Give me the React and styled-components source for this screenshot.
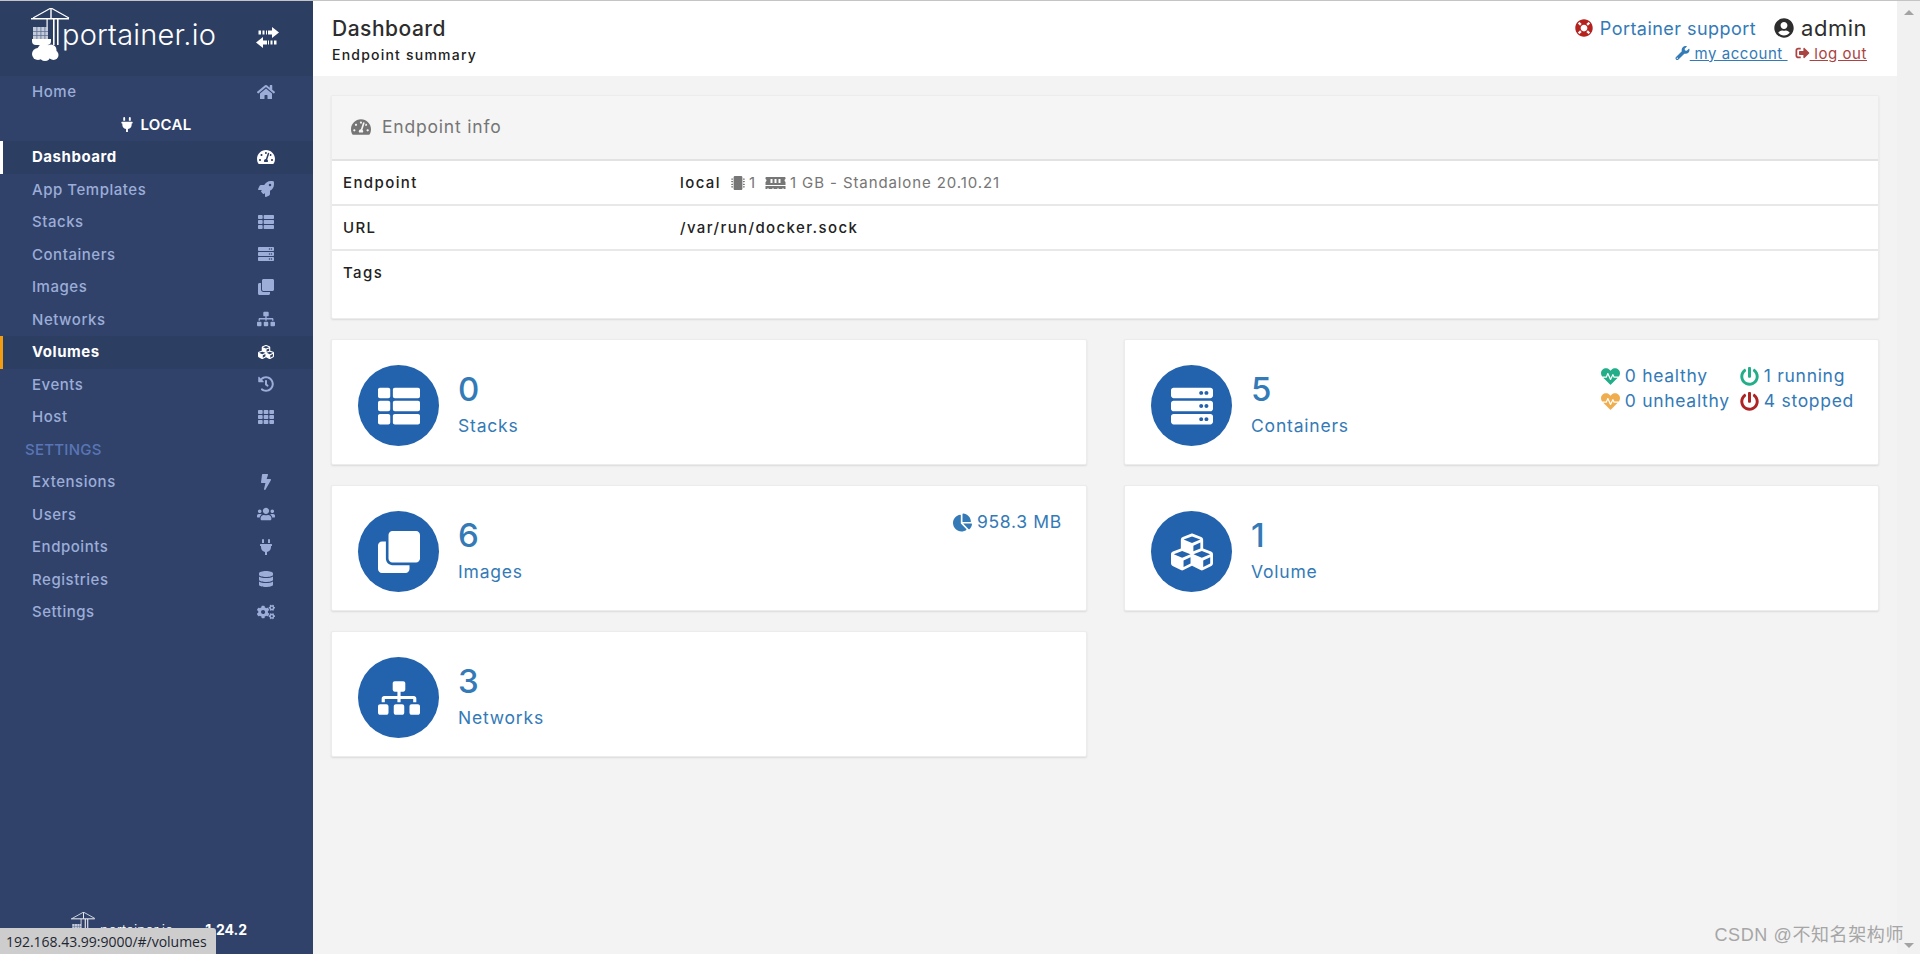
import React from "react";
import styled, { createGlobalStyle } from "styled-components";
import {
  FaHome,
  FaTachometerAlt,
  FaRocket,
  FaThList,
  FaServer,
  FaClone,
  FaSitemap,
  FaCubes,
  FaHistory,
  FaTh,
  FaBolt,
  FaUsers,
  FaPlug,
  FaDatabase,
  FaCogs,
  FaHeartbeat,
  FaPowerOff,
  FaChartPie,
  FaMemory,
  FaMicrochip,
  FaLifeRing,
  FaUserCircle,
  FaWrench,
  FaSignOutAlt,
} from "react-icons/fa";

const GlobalStyle = createGlobalStyle`
  html, body {
    margin: 0;
    height: 100%;
    overflow: hidden;
    background: #f3f3f3;
    font-family: Inter, "Liberation Sans", "Noto Sans CJK SC", sans-serif;
  }
  * { box-sizing: border-box; }
`;

const Page = styled.div`
  position: relative;
  display: flex;
  height: 954px;
  border-top: 1px solid #c4c4c4;
`;

const Sidebar = styled.aside`
  display: flex;
  flex-direction: column;
  width: 313px;
  flex: none;
  background: #30426a;
`;

const Brand = styled.div`
  display: flex;
  align-items: center;
  height: 75px;
  padding-left: 31px;
  background: #2d3e63;
  color: #fff;
`;

const BrandName = styled.span`
  margin-left: -9px;
  margin-top: -9px;
  font-size: 29px;
  font-weight: 300;
  letter-spacing: 0.2px;
`;

const Toggle = styled.svg`
  width: 23px;
  height: 21px;
  margin-left: auto;
  margin-right: 34px;
  margin-top: -2px;
`;

const NavRow = styled.div`
  display: flex;
  align-items: center;
  justify-content: space-between;
  height: 32.5px;
  padding: 0 38px 1px ${(p) => (p.$active ? 29 : 32)}px;
  font-size: 15px;
  font-weight: 500;
  letter-spacing: 0.53px;
  color: ${(p) => (p.$active ? "#fff" : "#9cadd8")};
  background: ${(p) => (p.$active ? "#2d3e63" : "transparent")};
  border-left: ${(p) => (p.$active ? `3px solid ${p.$active}` : "none")};
  font-weight: ${(p) => (p.$active ? 700 : 500)};

  svg {
    width: 18px;
    height: 16px;
    color: ${(p) => (p.$active ? "#fff" : "#9cadd8")};
  }
`;

const EndpointName = styled.div`
  display: flex;
  align-items: center;
  justify-content: center;
  gap: 6px;
  height: 32.5px;
  padding-right: 1px;
  color: #fff;
  font-size: 15px;
  font-weight: 600;
  letter-spacing: 0.3px;

  svg {
    width: 14px;
    height: 15px;
  }
`;

const SectionTitle = styled.div`
  display: flex;
  align-items: center;
  height: 32.5px;
  padding-left: 25px;
  font-size: 15px;
  font-weight: 500;
  letter-spacing: 0.25px;
  color: #5a75b5;
`;

const Footer = styled.div`
  display: flex;
  align-items: center;
  margin-top: auto;
  height: 50px;
  padding: 0 0 0 71px;
  color: #fff;
  font-size: 14px;
`;

const FooterName = styled.span`
  margin-left: 4px;
  font-size: 14px;
  font-weight: 300;
`;

const Version = styled.span`
  margin-left: 32px;
  font-weight: 700;
`;

const StatusBubble = styled.div`
  position: absolute;
  left: 0;
  bottom: 0;
  display: flex;
  align-items: center;
  width: 216px;
  height: 26px;
  padding-left: 6px;
  background: #cdcdcd;
  border-top-right-radius: 3px;
  color: #1d2733;
  font-family: "Open Sans", sans-serif;
  font-size: 14px;
  letter-spacing: -0.02px;
  white-space: nowrap;
`;

const Main = styled.main`
  display: flex;
  flex-direction: column;
  flex: 1;
  min-width: 0;
`;

const TopBar = styled.header`
  display: flex;
  justify-content: space-between;
  height: 75px;
  padding: 0 30px 0 19px;
  background: #fff;
`;

const TitleBlock = styled.div`
  padding-top: 16px;
`;

const Title = styled.div`
  font-size: 21px;
  line-height: 24px;
  font-weight: 500;
  letter-spacing: 0.5px;
  color: #2d2d2d;
`;

const Subtitle = styled.div`
  margin-top: 6px;
  font-size: 14px;
  line-height: 16px;
  font-weight: 500;
  letter-spacing: 1.22px;
  color: #222;
`;

const UserBlock = styled.div`
  display: flex;
  flex-direction: column;
  align-items: flex-end;
  padding-top: 15px;
`;

const UserTop = styled.div`
  display: flex;
  align-items: center;
  height: 24px;
`;

const SupportLink = styled.span`
  display: flex;
  align-items: center;
  gap: 7px;
  font-size: 18px;
  letter-spacing: 0.45px;
  color: #337ab7;

  svg {
    width: 18px;
    height: 18px;
    color: #b5221d;
  }
`;

const UserName = styled.span`
  display: flex;
  align-items: center;
  gap: 7px;
  margin-left: 18px;
  font-size: 22px;
  letter-spacing: 0.5px;
  color: #2d2d2d;

  svg {
    width: 20px;
    height: 20px;
  }
`;

const UserLinks = styled.div`
  display: flex;
  align-items: center;
  gap: 7px;
  margin-top: 4px;
  height: 18px;
  font-size: 15px;
  letter-spacing: 0.55px;
`;

const UserLink = styled.span`
  display: flex;
  align-items: center;
  color: ${(p) => p.$color};
  text-decoration: underline;

  svg {
    width: 15px;
    height: 14px;
  }
`;

const Content = styled.div`
  display: flex;
  flex-direction: column;
  gap: 20px;
  padding: 19px 18px 0;
`;

const Panel = styled.section`
  background: #fff;
  border: 1px solid #ececec;
  border-radius: 2px;
  box-shadow: 0 1px 2px rgba(0, 0, 0, 0.1);
`;

const PanelHead = styled.div`
  display: flex;
  align-items: center;
  gap: 11px;
  height: 65px;
  padding: 0 0 2px 19px;
  background: #f5f5f5;
  border-bottom: 2px solid #e2e2e2;
  font-size: 17.5px;
  letter-spacing: 0.8px;
  color: #767676;

  svg {
    width: 20px;
    height: 18px;
  }
`;

const InfoRow = styled.div`
  display: grid;
  grid-template-columns: 337px 1fr;
  height: ${(p) => p.$height || 45}px;
  padding: 11.5px 0 0 11px;
  border-bottom: ${(p) => (p.$last ? "none" : "2px solid #e8e8e8")};
  font-size: 15px;
  line-height: 20px;
  font-weight: 500;
  letter-spacing: 1.4px;
  color: #222;
`;

const Value = styled.div`
  display: flex;
  align-items: center;
  height: 20px;
`;

const Muted = styled.span`
  display: inline-flex;
  align-items: center;
  margin-left: ${(p) => p.$gap || 0}px;
  color: #767676;
  font-weight: 400;
  letter-spacing: 0.9px;

  svg {
    width: ${(p) => p.$icon || 16}px;
    height: 16px;
    margin-right: 4px;
  }
`;

const Cards = styled.div`
  display: grid;
  grid-template-columns: 756px 1fr;
  gap: 20px 37px;
`;

const Card = styled.section`
  display: flex;
  height: 126px;
  padding: 25px 24px 0 26px;
  background: #fff;
  border: 1px solid #ececec;
  border-radius: 2px;
  box-shadow: 0 1px 2px rgba(0, 0, 0, 0.1);
  color: #337ab7;
`;

const Badge = styled.div`
  display: flex;
  align-items: center;
  justify-content: center;
  flex: none;
  width: 81px;
  height: 81px;
  border-radius: 50%;
  background: #2362ad;
  color: #fff;

  svg {
    width: 42px;
    height: 42px;
  }
`;

const Stat = styled.div`
  margin-left: 19px;
`;

const StatNumber = styled.div`
  font-size: 33px;
  line-height: 40px;
  font-weight: 500;
  margin-top: 4px;
`;

const StatLabel = styled.div`
  margin-top: 7px;
  font-size: 17.5px;
  line-height: 20px;
  letter-spacing: 0.8px;
`;

const Aside = styled.div`
  display: grid;
  grid-template-columns: ${(p) => p.$columns || "auto"};
  column-gap: 10px;
  row-gap: 5px;
  align-self: flex-start;
  margin-left: auto;
  margin-top: 1px;
  font-size: 17.5px;
  line-height: 20px;
  letter-spacing: 0.7px;
`;

const AsideItem = styled.div`
  display: flex;
  align-items: center;
  gap: 5px;

  svg {
    width: 19px;
    height: 19px;
    color: ${(p) => p.$color || "#337ab7"};
  }
`;

const Rail = styled.div`
  display: flex;
  flex-direction: column;
  align-items: center;
  justify-content: space-between;
  flex: none;
  width: 23px;
  padding: 9px 0 6px;
  background: #f1f1f1;
`;

const Arrow = styled.div`
  width: 0;
  height: 0;
  border-left: 5px solid transparent;
  border-right: 5px solid transparent;
  border-${(p) => (p.$down ? "top" : "bottom")}: 5px solid #a3a3a3;
`;

const Watermark = styled.div`
  position: absolute;
  right: 16px;
  bottom: 9px;
  font-family: "Liberation Sans", "Noto Sans CJK SC", sans-serif;
  font-size: 18px;
  line-height: 20px;
  letter-spacing: 0.6px;
  color: #a6a6a6;
`;

// crane, containers and cloud of the portainer logo
const Crane = (props) => (
  <svg viewBox="0 0 40 54" fill="#fff" {...props}>
    <path d="M0 10h38v1.500H0z" />
    <path d="M20 0 2 10M20 0l18 10" stroke="#fff" strokeWidth="1.200" fill="none" />
    <path d="M19.300 0h1.400v10h-1.400z" />
    <path d="M22 11h1.600v26H22zM26 11h1.600v26H26z" />
    <path d="M15.500 11h1.200v8h-1.200z" />
    <path d="M2 19h15v12H2z" fill="#c4cbdb" />
    <path d="M5.500 19h.8v12h-.8zM9.500 19h.8v12h-.8zM13.500 19h.8v12h-.8zM2 23h15v.8H2zM2 27h15v.8H2z" fill="#5f6f92" />
    <path d="M1 31h19v2a4 4 0 0 1-4 4H5a4 4 0 0 1-4-4z" />
    <circle cx="7" cy="46" r="6" />
    <circle cx="13" cy="42" r="6.500" />
    <circle cx="20" cy="42" r="5.500" />
    <circle cx="22.500" cy="47" r="5" />
    <circle cx="14" cy="47.500" r="5.500" />
  </svg>
);

const BrandCrane = styled(Crane)`
  width: 40px;
  height: 54px;
  flex: none;
  margin-top: -7px;
`;

const FooterCrane = styled(Crane)`
  width: 25px;
  height: 34px;
  flex: none;
`;

const navTop = [
  ["Dashboard", FaTachometerAlt, "#fff"],
  ["App Templates", FaRocket],
  ["Stacks", FaThList],
  ["Containers", FaServer],
  ["Images", FaClone],
  ["Networks", FaSitemap],
  ["Volumes", FaCubes, "#f29c12"],
  ["Events", FaHistory],
  ["Host", FaTh],
];

const navSettings = [
  ["Extensions", FaBolt],
  ["Users", FaUsers],
  ["Endpoints", FaPlug],
  ["Registries", FaDatabase],
  ["Settings", FaCogs],
];

const Item = ({ label, icon: Icon, active }) => (
  <NavRow $active={active}>
    {label}
    <Icon />
  </NavRow>
);

const StatCard = ({ icon: Icon, count, label, children }) => (
  <Card>
    <Badge>
      <Icon />
    </Badge>
    <Stat>
      <StatNumber>{count}</StatNumber>
      <StatLabel>{label}</StatLabel>
    </Stat>
    {children}
  </Card>
);

export default function App() {
  return (
    <Page>
      <GlobalStyle />
      <Sidebar>
        <Brand>
          <BrandCrane />
          <BrandName>portainer.io</BrandName>
          <Toggle viewBox="0 0 23 21" fill="#fff">
            <path d="M23 5.500 16 0v3.500h-4v4h4V11zM10 3.500h1v4h-1zM6.500 3.500h2v4h-2zM2.500 3.500h2.500v4H2.500z" />
            <path d="M0 15.500 7 10v3.500h4v4H7V21zM13 13.500h-1v4h1zM16.500 13.500h-2v4h2zM20.500 13.500H18v4h2.500z" />
          </Toggle>
        </Brand>
        <Item label="Home" icon={FaHome} />
        <EndpointName>
          <FaPlug />
          LOCAL
        </EndpointName>
        {navTop.map(([label, icon, active]) => (
          <Item key={label} label={label} icon={icon} active={active} />
        ))}
        <SectionTitle>SETTINGS</SectionTitle>
        {navSettings.map(([label, icon]) => (
          <Item key={label} label={label} icon={icon} />
        ))}
        <Footer>
          <FooterCrane />
          <FooterName>portainer.io</FooterName>
          <Version>1.24.2</Version>
        </Footer>
      </Sidebar>

      <Main>
        <TopBar>
          <TitleBlock>
            <Title>Dashboard</Title>
            <Subtitle>Endpoint summary</Subtitle>
          </TitleBlock>
          <UserBlock>
            <UserTop>
              <SupportLink>
                <FaLifeRing />
                Portainer support
              </SupportLink>
              <UserName>
                <FaUserCircle />
                admin
              </UserName>
            </UserTop>
            <UserLinks>
              <UserLink $color="#337ab7">
                <FaWrench />
                <span>&nbsp;my account&nbsp;</span>
              </UserLink>
              <UserLink $color="#a94442">
                <FaSignOutAlt />
                <span>&nbsp;log out</span>
              </UserLink>
            </UserLinks>
          </UserBlock>
        </TopBar>

        <Content>
          <Panel>
            <PanelHead>
              <FaTachometerAlt />
              Endpoint info
            </PanelHead>
            <InfoRow>
              <div>Endpoint</div>
              <Value>
                local
                <Muted $gap={10} $icon={14}>
                  <FaMicrochip /> 1
                </Muted>
                <Muted $gap={9} $icon={21}>
                  <FaMemory /> 1 GB - Standalone 20.10.21
                </Muted>
              </Value>
            </InfoRow>
            <InfoRow>
              <div>URL</div>
              <Value>/var/run/docker.sock</Value>
            </InfoRow>
            <InfoRow $height={67} $last>
              <div>Tags</div>
            </InfoRow>
          </Panel>

          <Cards>
            <StatCard icon={FaThList} count="0" label="Stacks" />
            <StatCard icon={FaServer} count="5" label="Containers">
              <Aside $columns="auto auto">
                <AsideItem $color="#23ae89">
                  <FaHeartbeat /> 0 healthy
                </AsideItem>
                <AsideItem $color="#23ae89">
                  <FaPowerOff /> 1 running
                </AsideItem>
                <AsideItem $color="#f0ad4e">
                  <FaHeartbeat /> 0 unhealthy
                </AsideItem>
                <AsideItem $color="#ae2323">
                  <FaPowerOff /> 4 stopped
                </AsideItem>
              </Aside>
            </StatCard>
            <StatCard icon={FaClone} count="6" label="Images">
              <Aside>
                <AsideItem>
                  <FaChartPie /> 958.3 MB
                </AsideItem>
              </Aside>
            </StatCard>
            <StatCard icon={FaCubes} count="1" label="Volume" />
            <StatCard icon={FaSitemap} count="3" label="Networks" />
          </Cards>
        </Content>
      </Main>

      <Rail>
        <Arrow />
        <Arrow $down />
      </Rail>

      <StatusBubble>192.168.43.99:9000/#/volumes</StatusBubble>
      <Watermark>CSDN @不知名架构师</Watermark>
    </Page>
  );
}
